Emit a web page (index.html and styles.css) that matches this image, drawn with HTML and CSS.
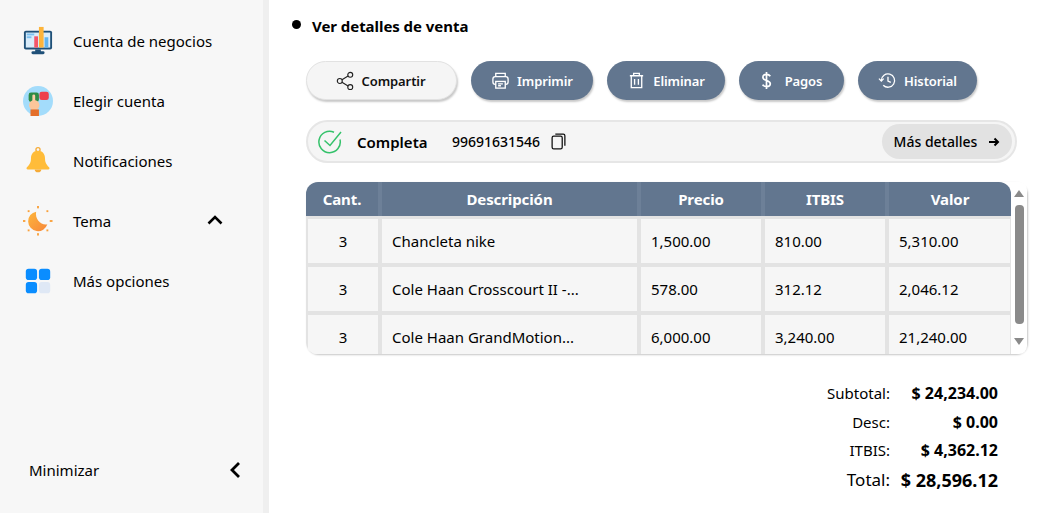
FILE: index.html
```html
<!DOCTYPE html>
<html lang="es">
<head>
<meta charset="utf-8">
<title>Ver detalles de venta</title>
<link rel="stylesheet" href="styles.css">
</head>
<body>
<div class="app">
  <aside class="sidebar">
    <nav class="menu">
      <div class="item">
        <svg class="mi" viewBox="0 0 32 32"><rect x="1" y="5" width="30" height="20" rx="2" fill="#1f5078"/><rect x="3" y="7" width="26" height="16" fill="#d9ecfa"/><rect x="4" y="8" width="8" height="2" fill="#7cc0f0"/><rect x="4" y="11" width="5" height="2" fill="#7cc0f0"/><rect x="12" y="11" width="4" height="12" fill="#f4566a"/><rect x="17" y="1" width="5" height="22" fill="#fdb43a"/><rect x="23" y="12" width="4" height="11" fill="#62b4ee"/><rect x="13" y="25" width="6" height="3" fill="#1f5078"/><rect x="9" y="27" width="14" height="3" rx="1.5" fill="#1f5078"/></svg>
        <span>Cuenta de negocios</span>
      </div>
      <div class="item">
        <svg class="mi" viewBox="0 0 32 32"><circle cx="16" cy="16" r="16" fill="#a3dcfb"/><rect x="6" y="7" width="11" height="10" rx="2.500" fill="#2e8b45"/><rect x="17.500" y="6" width="10" height="9" rx="2.500" fill="#ee3f4c"/><rect x="10" y="9" width="3" height="10" rx="1.500" fill="#fdd0a8"/><circle cx="12" cy="20.500" r="5.500" fill="#fdc69a"/><rect x="8" y="25" width="9" height="7" fill="#e46f2a"/></svg>
        <span>Elegir cuenta</span>
      </div>
      <div class="item">
        <svg class="mi" viewBox="0 0 32 32"><circle cx="16" cy="4" r="2.200" fill="none" stroke="#f6ab37" stroke-width="1.400"/><path d="M16 5c-5 0-7.500 3.500-7.500 8.500 0 5-2.500 7-4.500 9.500-.7 1 0 2 1 2h22c1 0 1.700-1 1-2-2-2.500-4.500-4.500-4.500-9.500C23.500 8.500 21 5 16 5z" fill="#ffbc39"/><path d="M12.500 25a3.500 3 0 0 0 7 0z" fill="#f6ab37"/></svg>
        <span>Notificaciones</span>
      </div>
      <div class="item">
        <svg class="mi" viewBox="0 0 32 32"><defs><linearGradient id="moon" x1="0" y1="0" x2="1" y2="1"><stop offset="0" stop-color="#fdb63c"/><stop offset="1" stop-color="#f7873a"/></linearGradient></defs><path d="M14 6a10.500 10.500 0 1 0 12 13.500C19.500 21 12.500 14 14 6z" fill="url(#moon)"/><g fill="#f9a13c"><rect x="15" y="0" width="2" height="2.500"/><rect x="15" y="29" width="2" height="2.500"/><rect x="0" y="15" width="2.500" height="2"/><rect x="28.500" y="15" width="3" height="2"/><rect x="5" y="4.500" width="2" height="2"/><rect x="25" y="4.500" width="2" height="2"/><rect x="5" y="25" width="2" height="2"/><rect x="25" y="25" width="2" height="2"/></g></svg>
        <span>Tema</span>
        <svg class="chev" viewBox="0 0 16 10"><path d="M1.500 8.500L8 2l6.500 6.500" fill="none" stroke="#000" stroke-width="2.600"/></svg>
      </div>
      <div class="item">
        <svg class="mi" viewBox="0 0 32 32"><rect x="3" y="3" width="12" height="12" rx="3" fill="#0a8dff"/><rect x="17" y="3" width="12" height="12" rx="3" fill="#0a8dff"/><rect x="3" y="17" width="12" height="12" rx="3" fill="#0a8dff"/><rect x="17" y="17" width="12" height="12" rx="3" fill="#dfe8f5"/></svg>
        <span>Más opciones</span>
      </div>
    </nav>
    <div class="minimize">
      <span>Minimizar</span>
      <svg class="chev-left" viewBox="0 0 12 18"><path d="M10 2L3 9l7 7" fill="none" stroke="#000" stroke-width="2.800"/></svg>
    </div>
  </aside>
  <main class="content">
    <h1 class="title"><i class="dot"></i>Ver detalles de venta</h1>
    <div class="actions">
      <button class="btn btn-light">
        <svg class="bi" viewBox="0 0 20 20" fill="none" stroke="#222" stroke-width="1.200"><circle cx="15" cy="4" r="2.600"/><circle cx="4" cy="10.500" r="2.600"/><circle cx="15" cy="17" r="2.600"/><path d="M6.300 9.200l6.400-3.900M6.300 11.800l6.400 3.900"/></svg>
        Compartir
      </button>
      <button class="btn btn-imprimir">
        <svg class="bi" viewBox="0 0 20 20" fill="none" stroke="#fff" stroke-width="1.400"><path d="M5 6V2.500h10V6"/><rect x="2" y="6" width="16" height="8" rx="2.500"/><rect x="5" y="11" width="10" height="7" fill="#62768f"/><path d="M7.500 13.500h5M7.500 15.500h3"/></svg>
        Imprimir
      </button>
      <button class="btn btn-eliminar">
        <svg class="bi" viewBox="0 0 20 20" fill="none" stroke="#fff" stroke-width="1.400"><path d="M3 5h14M7 5V2.500h6V5M4.500 5v12.500h11V5M8 8.500v6M12 8.500v6"/></svg>
        Eliminar
      </button>
      <button class="btn btn-pagos">
        <svg class="bi" viewBox="0 0 20 20" fill="none" stroke="#fff" stroke-width="1.800"><path d="M14 5.500C13 4 11.500 3.500 10 3.500c-2 0-3.800 1-3.800 3 0 4.500 7.800 2.500 7.800 7 0 2-1.800 3-4 3-1.700 0-3.200-.7-4-2.200M10 1v18"/></svg>
        Pagos
      </button>
      <button class="btn btn-historial">
        <svg class="bi" viewBox="0 0 20 20" fill="none" stroke="#fff" stroke-width="1.400"><path d="M3.500 10a7 7 0 1 1 2 5"/><path d="M1 8l2.500 2.500L6 8"/><path d="M10.500 6v4.500l3 1.500"/></svg>
        Historial
      </button>
    </div>
    <div class="status">
      <svg class="check" viewBox="0 0 24 24" fill="none" stroke="#35c26b" stroke-width="1.500"><path d="M22 9.500A10.700 10.700 0 1 1 16 2.200"/><path d="M6.500 10.500l5.500 5L23 2"/></svg>
      <strong class="state">Completa</strong>
      <span class="code">99691631546</span>
      <svg class="copy" viewBox="0 0 14 16" fill="none" stroke="#111" stroke-width="1.200"><rect x="1" y="3" width="9.500" height="12" rx="1.500"/><path d="M4 1h7.500A1.500 1.500 0 0 1 13 2.500V12"/></svg>
      <button class="more">Más detalles
        <svg class="arrow" viewBox="0 0 12 12" fill="none" stroke="#000" stroke-width="2"><path d="M1 6h9M6.500 2.500L10 6l-3.500 3.500"/></svg>
      </button>
    </div>
    <div class="table-wrap">
      <div class="table-scroll">
        <table class="grid">
          <colgroup><col class="c1"><col class="c2"><col class="c3"><col class="c3"><col class="c4"></colgroup>
          <thead><tr><th>Cant.</th><th>Descripción</th><th>Precio</th><th>ITBIS</th><th>Valor</th></tr></thead>
          <tbody>
            <tr><td class="center">3</td><td>Chancleta nike</td><td>1,500.00</td><td>810.00</td><td>5,310.00</td></tr>
            <tr><td class="center">3</td><td>Cole Haan Crosscourt II -...</td><td>578.00</td><td>312.12</td><td>2,046.12</td></tr>
            <tr><td class="center">3</td><td>Cole Haan GrandMotion...</td><td>6,000.00</td><td>3,240.00</td><td>21,240.00</td></tr>
          </tbody>
        </table>
      </div>
      <div class="scrollbar"><i class="up"></i><i class="thumb"></i><i class="down"></i></div>
    </div>
    <dl class="totals">
      <dt>Subtotal:</dt><dd>$ 24,234.00</dd>
      <dt>Desc:</dt><dd>$ 0.00</dd>
      <dt>ITBIS:</dt><dd>$ 4,362.12</dd>
      <dt class="big">Total:</dt><dd class="big">$ 28,596.12</dd>
    </dl>
  </main>
</div>
</body>
</html>
```
FILE: styles.css
```css
* { box-sizing: border-box; }
html, body { margin: 0; height: 100%; background: #fff; overflow: hidden; }
body { font-family: "Noto Sans", "Open Sans", sans-serif; color: #000; font-size: 15px; }
.app { display: flex; height: 513px; }

.sidebar { width: 269px; flex: none; background: #f7f7f7; border-right: 6px solid #efefef; display: flex; flex-direction: column; padding: 11px 0 13px; justify-content: space-between; }
.menu { display: flex; flex-direction: column; }
.item { height: 60px; display: flex; align-items: center; padding-left: 23px; position: relative; }
.mi { width: 30px; height: 30px; margin-right: 20px; flex: none; }
.chev { width: 16px; height: 10px; position: absolute; left: 207px; top: 24px; }
.minimize { display: flex; align-items: center; justify-content: space-between; padding: 0 22px 0 29px; height: 60px; }
.chev-left { width: 12px; height: 18px; }

.content { flex: 1; min-width: 0; padding: 15px 0 0 23px; }
.title { margin: 0; font-size: 15px; font-weight: 700; line-height: 22px; display: flex; align-items: center; letter-spacing: -0.05px; }
.dot { width: 9px; height: 9px; border-radius: 50%; background: #000; margin-right: 11px; margin-bottom: 3px; }

.actions { display: flex; gap: 14px; margin: 24px 0 0 14px; }
.btn { height: 39px; border-radius: 20px; border: 0; background: #62768f; color: #fff; font: 600 13px "Noto Sans", sans-serif; display: flex; align-items: center; justify-content: center; gap: 7px; box-shadow: 1px 2px 2px #c9c9c9; padding: 0; letter-spacing: -0.1px; }
.btn-light { width: 151px; background: #f5f5f5; color: #111; border: 1px solid #e2e2e2; padding-right: 2px; }
.btn-imprimir { width: 122px; }
.btn-eliminar { width: 118px; }
.btn-pagos { width: 105px; gap: 9px; padding-right: 4px; }
.btn-historial { width: 119px; }
.bi { width: 19px; height: 19px; flex: none; }

.status { display: flex; align-items: center; width: 711px; height: 43px; margin: 20px 0 0 14px; background: #f5f5f5; border: 2px solid #e6e6e6; border-radius: 22px; padding: 0 3px 0 10px; }
.check { width: 24px; height: 24px; flex: none; margin-right: 15px; }
.state { font-weight: 600; font-size: 15px; width: 95px; }
.code { font-size: 14px; font-weight: 500; margin-right: 11px; }
.copy { width: 15px; height: 17px; }
.more { margin-left: auto; height: 35px; width: 130px; border: 0; border-radius: 18px; background: #e2e2e2; font: 500 14px "Noto Sans", sans-serif; display: flex; align-items: center; justify-content: center; gap: 11px; padding: 0; color: #000; }
.arrow { width: 12px; height: 12px; }

.table-wrap { display: flex; width: 721px; height: 172px; margin: 19px 0 0 14px; border-radius: 12px; box-shadow: 1px 1px 2px #c6c6c6; }
.table-scroll { width: 705px; height: 172px; overflow: hidden; border-radius: 12px 12px 0 12px; background: #f6f6f6; }
.grid { border-collapse: separate; border-spacing: 0; table-layout: fixed; width: 705px; font-size: 15px; }
.c1 { width: 76px; }
.c2 { width: 259px; }
.c3 { width: 124px; }
.c4 { width: 122px; }
.grid th { background: #62768f; color: #fff; font-weight: 700; font-size: 15px; height: 34px; padding: 0; border-right: 4px solid #6d8098; letter-spacing: -0.1px; }
.grid th:last-child { border-right: 0; }
.grid td { background: #f6f6f6; height: 48px; padding: 0 0 0 10px; border-right: 4px solid #e3e3e3; border-bottom: 4px solid #e3e3e3; white-space: nowrap; }
.grid tbody tr:first-child td { height: 51px; border-top: 3px solid #e3e3e3; }
.grid td:first-child { border-left: 2px solid #e3e3e3; }
.grid td:last-child { border-right: 1px solid #e3e3e3; }
.grid td.center { text-align: center; padding: 0; }
.scrollbar { width: 16px; display: flex; flex-direction: column; align-items: center; background: #fff; border-radius: 0 8px 8px 0; padding-top: 8px; }
.thumb { width: 9px; height: 119px; background: #8a8a8a; border-radius: 4px; margin: 8px 0 14px; }
.up { border: 5px solid transparent; border-top: 0; border-bottom: 7px solid #8a8a8a; width: 0; height: 0; }
.down { border: 5px solid transparent; border-bottom: 0; border-top: 7px solid #8a8a8a; width: 0; height: 0; }

.totals { display: grid; grid-template-columns: auto 108px; justify-content: end; margin: 25px 43px 0 0; font-size: 15px; align-items: center; }
.totals dt { text-align: right; height: 28.5px; line-height: 28.5px; }
.totals dd { margin: 0; text-align: right; font-weight: 700; font-size: 16px; height: 28.5px; line-height: 28.5px; }
.totals .big { font-size: 17px; height: 32px; line-height: 30px; }
.totals dd.big { font-size: 18px; }
```
